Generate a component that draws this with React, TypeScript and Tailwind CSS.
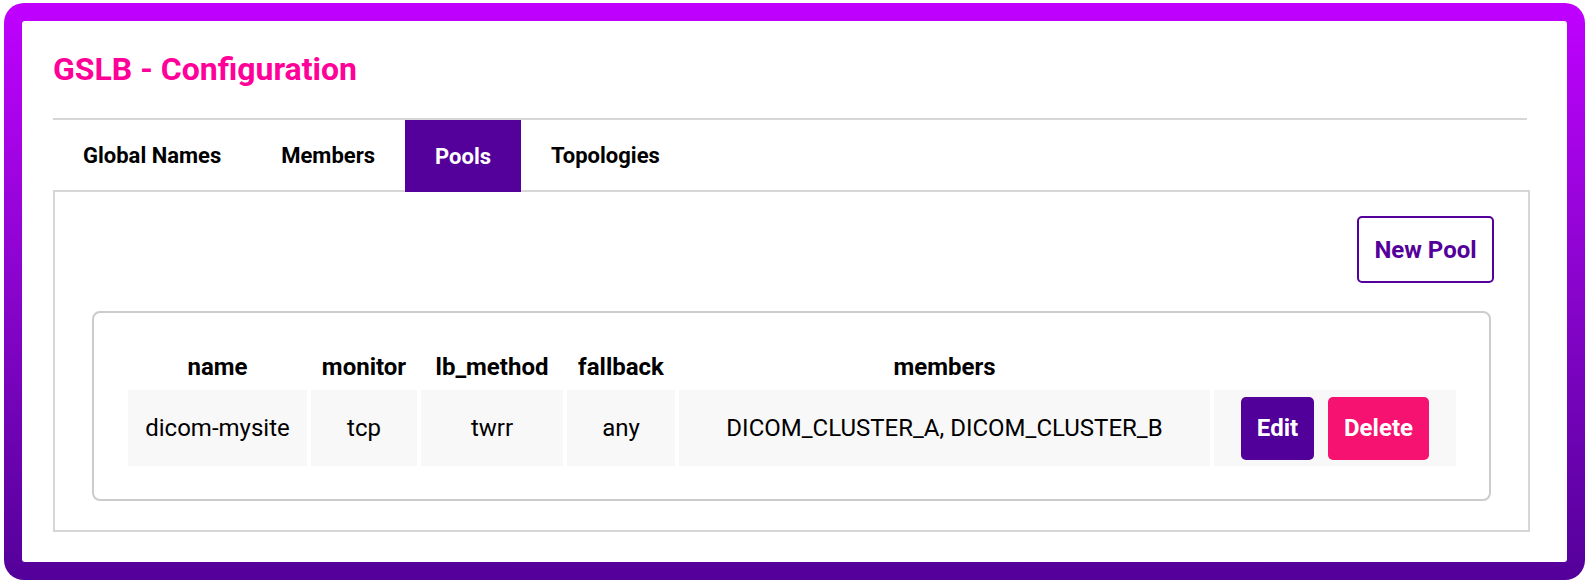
import React from "react";

const headers = [
  { label: "name", w: "w-[179px]" },
  { label: "monitor", w: "w-[106px]" },
  { label: "lb_method", w: "w-[142px]" },
  { label: "fallback", w: "w-[108px]" },
  { label: "members", w: "w-[531px]" },
  { label: "", w: "w-[242px]" },
];

const row = ["dicom-mysite", "tcp", "twrr", "any", "DICOM_CLUSTER_A, DICOM_CLUSTER_B"];

export default function App() {
  return (
    <div
      className="w-[1590px] h-[583px] bg-white pt-[3px] pl-[4px] pr-[5px] pb-[3px]"
      style={{ fontFamily: "Roboto, 'Liberation Sans', sans-serif" }}
    >
      <div className="h-full rounded-[20px] bg-gradient-to-b from-[#c000ff] to-[#54009a] p-[18px]">
        <div className="h-full bg-white rounded-[3px] pt-[29px] pl-[31px] pr-[37px]">
          <h1 className="text-[32px] leading-[38px] font-bold text-[#ff0099] mb-[30px]">
            GSLB - Configuration
          </h1>
          <div className="border-t-2 border-[#d6d6d6] mr-[3px]" />
          <div className="flex items-start h-[70px] text-[22px] font-bold text-black">
            <div className="px-[30px] h-[70px] flex items-center">Global Names</div>
            <div className="px-[30px] h-[70px] flex items-center">Members</div>
            <div className="px-[30px] h-[72px] flex items-center bg-[#54009a] text-white relative z-10">
              Pools
            </div>
            <div className="px-[30px] h-[70px] flex items-center">Topologies</div>
          </div>
          <div className="border-2 border-[#d6d6d6] h-[342px] pt-[24px] px-[37px]">
            <div className="flex justify-end -mr-[3px]">
              <button className="w-[137px] h-[67px] border-2 border-[#54009a] rounded-[5px] text-[24px] font-bold text-[#54009a] bg-white">
                New Pool
              </button>
            </div>
            <div className="mt-[28px] border-2 border-[#cccccc] rounded-[8px] px-[30px] pt-[30px] pb-[29px]">
              <table className="w-full table-fixed border-separate border-spacing-[4px]">
                <thead>
                  <tr>
                    {headers.map((h, i) => (
                      <th
                        key={i}
                        className={`${h.w} h-[39px] p-0 text-[24px] leading-[28px] font-bold text-black text-center align-middle`}
                      >
                        {h.label}
                      </th>
                    ))}
                  </tr>
                </thead>
                <tbody>
                  <tr>
                    {row.map((c, i) => (
                      <td
                        key={i}
                        className="h-[76px] p-0 bg-[#f8f8f8] text-[24px] leading-[28px] text-black text-center align-middle"
                      >
                        {c}
                      </td>
                    ))}
                    <td className="h-[76px] p-0 bg-[#f8f8f8] align-middle">
                      <div className="flex justify-center gap-[14px]">
                        <button className="w-[73px] h-[63px] rounded-[5px] bg-[#52009a] text-white text-[24px] font-bold">
                          Edit
                        </button>
                        <button className="w-[101px] h-[63px] rounded-[5px] bg-[#f51270] text-white text-[24px] font-bold">
                          Delete
                        </button>
                      </div>
                    </td>
                  </tr>
                </tbody>
              </table>
            </div>
          </div>
        </div>
      </div>
    </div>
  );
}
